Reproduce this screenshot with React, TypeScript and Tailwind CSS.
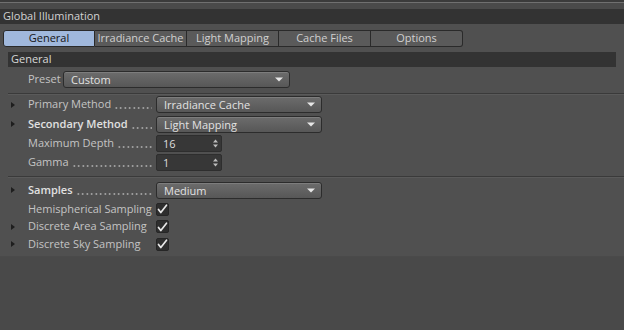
import React from 'react';

const font = { fontFamily: '"Open Sans", "Noto Sans", sans-serif' };

function Arrow() {
  return (
    <svg width="8" height="5" viewBox="0 0 8 5" className="shrink-0">
      <path d="M0 0.5 L8 0.5 L4 4.5 Z" fill="#e6e6e6" />
    </svg>
  );
}

function Triangle() {
  return (
    <div className="w-[28px] flex justify-start pl-[11px] shrink-0">
      <svg width="4" height="6" viewBox="0 0 4 6">
        <path d="M0 0 L4 3 L0 6 Z" fill="#1e1e1e" />
      </svg>
    </div>
  );
}

function Dropdown({ value, width }: { value: string; width: string }) {
  return (
    <div
      className={`${width} h-[17px] rounded-[3px] border border-[#2c2c2c] bg-gradient-to-b from-[#6c6c6c] to-[#575757] flex items-center justify-between pl-[7px] pr-[6px] text-[#e2e2e2] shadow-[inset_0_1px_0_rgba(255,255,255,0.12)]`}
    >
      <span className="leading-none">{value}</span>
      <Arrow />
    </div>
  );
}

function NumField({ value }: { value: string }) {
  return (
    <div className="w-[66px] h-[17px] rounded-[2px] border border-[#2e2e2e] bg-[#373737] flex items-center justify-between pl-[6px] pr-[3px] text-[#dedede]">
      <span className="leading-none">{value}</span>
      <svg width="5" height="9" viewBox="0 0 5 9">
        <path d="M0 3.5 L2.5 0.5 L5 3.5 Z" fill="#bdbdbd" />
        <path d="M0 5.5 L2.5 8.5 L5 5.5 Z" fill="#bdbdbd" />
      </svg>
    </div>
  );
}

function Check() {
  return (
    <div className="w-[13px] h-[13px] rounded-[2px] bg-[#2e2e2e] border border-[#262626] flex items-center justify-center">
      <svg width="11" height="10" viewBox="0 0 11 10">
        <path d="M1.5 5.5 L3.8 8.5 L9.5 1.2" stroke="#e8e8e8" strokeWidth="1.7" fill="none" strokeLinecap="round" strokeLinejoin="round" />
      </svg>
    </div>
  );
}

function Label({ text, bold, dots = true }: { text: string; bold?: boolean; dots?: boolean }) {
  return (
    <div className="w-[128px] shrink-0 flex items-center whitespace-nowrap pr-[4px]">
      <span className={bold ? 'font-semibold text-[#e0e0e0]' : 'text-[#c4c4c4]'}>{text}</span>
      {dots && (
        <div className="ml-[3px] mt-[7px] flex-1 h-[2px] bg-[radial-gradient(circle,#b0b0b0_0.8px,transparent_1.1px)] bg-[length:4.5px_2px] bg-repeat-x" />
      )}
    </div>
  );
}

function Row({ h, tri, children }: { h: string; tri?: boolean; children: React.ReactNode }) {
  return (
    <div className={`${h} flex items-center`}>
      {tri ? <Triangle /> : <div className="w-[28px] shrink-0" />}
      {children}
    </div>
  );
}

const tabs = ['General', 'Irradiance Cache', 'Light Mapping', 'Cache Files', 'Options'];

export default function App() {
  return (
    <div className="w-[624px] h-[330px] bg-[#494949] overflow-hidden text-[11px]" style={font}>
      <div className="h-[2px] bg-[#3b3b3b]" />
      <div className="h-px bg-[#707070]" />
      <div className="h-[6px] bg-[#4a4a4a]" />
      <div className="h-[15px] bg-[#333333] pl-[3px] flex items-center text-[11px] text-[#d2d2d2]">
        Global Illumination
      </div>

      <div className="h-[233px] bg-[#505050] pt-[6px] border-b border-[#4a4a4a]">
        {/* Tabs */}
        <div className="flex ml-[3px] h-[17px]">
          {tabs.map((t, i) => (
            <div
              key={t}
              className={`w-[92px] flex items-center justify-center border-y border-[#2a2a2a] border-r ${
                i === 0 ? 'border-l rounded-l-[3px] bg-[#a0b8dc] text-[#141414]' : 'bg-[#5a5a5a] text-[#d0d0d0]'
              } ${i === tabs.length - 1 ? 'rounded-r-[3px]' : ''}`}
            >
              {t}
            </div>
          ))}
        </div>

        {/* Section header */}
        <div className="mt-[5px] ml-[8px] w-[608px] h-[15px] bg-[#333333] flex items-center pl-[3px] text-[#d8d8d8] font-medium">
          General
        </div>

        {/* Preset */}
        <div className="mt-[4px] h-[16px] flex items-center">
          <span className="ml-[28px] w-[35px] text-[#c4c4c4]">Preset</span>
          <Dropdown value="Custom" width="w-[227px]" />
        </div>

        <div className="mt-[6px] ml-[8px] h-px bg-[#3a3a3a]" />
        <div className="ml-[8px] h-px bg-[#5a5a5a]" />

        <div>
          <Row h="h-[19px]" tri>
            <Label text="Primary Method" />
            <Dropdown value="Irradiance Cache" width="w-[166px]" />
          </Row>
          <Row h="h-[20px]" tri>
            <Label text="Secondary Method" bold />
            <Dropdown value="Light Mapping" width="w-[166px]" />
          </Row>
          <Row h="h-[19px]">
            <Label text="Maximum Depth" />
            <NumField value="16" />
          </Row>
          <Row h="h-[19px]">
            <Label text="Gamma" />
            <NumField value="1" />
          </Row>
        </div>

        <div className="mt-[4px] ml-[8px] h-px bg-[#3a3a3a]" />
        <div className="ml-[8px] h-px bg-[#5a5a5a]" />

        <div className="mt-[2px]">
          <Row h="h-[20px]" tri>
            <Label text="Samples" bold />
            <Dropdown value="Medium" width="w-[166px]" />
          </Row>
          <Row h="h-[18px]">
            <Label text="Hemispherical Sampling" dots={false} />
            <Check />
          </Row>
          <Row h="h-[17px]" tri>
            <Label text="Discrete Area Sampling" dots={false} />
            <Check />
          </Row>
          <Row h="h-[18px]" tri>
            <Label text="Discrete Sky Sampling" dots={false} />
            <Check />
          </Row>
        </div>
      </div>
    </div>
  );
}
